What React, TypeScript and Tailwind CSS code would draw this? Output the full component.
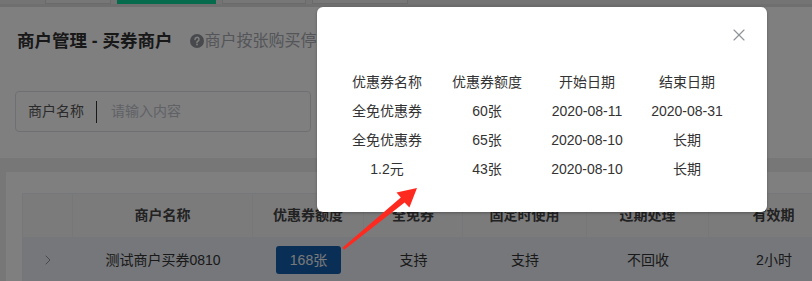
import React from 'react';
import { ChevronRight, X } from 'lucide-react';

const tabs = [
    { w: 'w-[66px]', active: false },
    { w: 'w-[99px]', active: true },
    { w: 'w-[84px]', active: false },
    { w: 'w-[96px]', active: false },
];

const columns = [
    { key: 'expand', label: '', w: 'w-[50px]' },
    { key: 'name', label: '商户名称', w: 'w-[180px]' },
    { key: 'quota', label: '优惠券额度', w: 'w-[111px]' },
    { key: 'free', label: '全免券', w: 'w-[99px]' },
    { key: 'fixed', label: '固定时使用', w: 'w-[124px]' },
    { key: 'expire', label: '过期处理', w: 'w-[122px]' },
    { key: 'valid', label: '有效期', w: 'w-[130px]' },
];

const coupons = [
    { name: '全免优惠券', quota: '60张', start: '2020-08-11', end: '2020-08-31' },
    { name: '全免优惠券', quota: '65张', start: '2020-08-10', end: '长期' },
    { name: '1.2元', quota: '43张', start: '2020-08-10', end: '长期' },
];

const QuestionIcon = () => (
    <svg width="14" height="14" viewBox="0 0 14 14">
        <circle cx="7" cy="7" r="7" fill="#909399" />
        <path d="M5 5.4a2 2 0 1 1 2.8 1.8c-.5.3-.8.6-.8 1.2v.4" stroke="#fff" strokeWidth="1.5" fill="none" strokeLinecap="round" />
        <circle cx="7" cy="10.6" r="0.9" fill="#fff" />
    </svg>
);

export default function App() {
    return (
        <div className="relative w-[812px] h-[281px] overflow-hidden bg-[#eeeeee] font-['Liberation_Sans','Noto_Sans_CJK_SC',sans-serif]">
            {/* top tab strip */}
            <div className="h-[7px] bg-[#e8e8e8] border-b-[3px] border-[#dedede] flex items-start gap-[6px] pl-[45px]">
                {tabs.map((t, i) => (
                    <div
                        key={i}
                        className={`${t.w} h-[4px] ${t.active ? 'bg-[#0cd698]' : 'bg-[#eeeeee] border-x border-b border-[#d4d4d4]'}`}
                    />
                ))}
            </div>

            {/* header block */}
            <div className="bg-white pt-[22px] pb-[26px]">
                <div className="flex items-center h-[24px] pl-[17px]">
                    <h1 className="text-[17.5px] font-bold text-[#303133] leading-[24px] whitespace-nowrap">商户管理 - 买券商户</h1>
                    <div className="ml-[17px] flex items-center gap-px">
                        <QuestionIcon />
                        <span className="text-[16px] text-[#a8abb2] leading-[24px] whitespace-nowrap">商户按张购买停车优惠券，可分发给车主使用</span>
                    </div>
                </div>
                <div className="mt-[38px] ml-[15px] w-[296px] h-[41px] border border-[#dcdfe6] rounded-[4px] flex items-center pl-[12px]">
                    <span className="text-[14px] text-[#555555]">商户名称</span>
                    <div className="ml-[12px] w-px h-[22px] bg-[#333333]" />
                    <span className="ml-[14px] text-[14px] text-[#c0c4cc]">请输入内容</span>
                </div>
            </div>

            {/* table panel */}
            <div className="pl-[6px] pt-[14px]">
                <div className="bg-white pt-[21px] pl-[16px]">
                    <div className="flex w-max border-l border-t border-[#ebeef5] bg-[#f7f7f9]">
                        {columns.map((c) => (
                            <div key={c.key} className={`${c.w} h-[44px] shrink-0 flex items-center justify-center border-r border-b border-[#ebeef5] text-[14px] font-bold text-[#444444] whitespace-nowrap`}>
                                {c.label}
                            </div>
                        ))}
                    </div>
                    <div className="flex w-max border-l border-[#ebeef5] bg-[#eaeef5] text-[14px] text-[#333333]">
                        <div className="w-[50px] h-[44px] shrink-0 flex items-center justify-center">
                            <ChevronRight size={16} strokeWidth={1.5} color="#909399" />
                        </div>
                        <div className="w-[180px] h-[44px] shrink-0 flex items-center justify-center">测试商户买券0810</div>
                        <div className="w-[111px] h-[44px] shrink-0 flex items-center justify-center">
                            <span className="w-[65px] h-[28px] rounded-[3px] bg-[#135faf] text-[#f2f2f2] flex items-center justify-center">168张</span>
                        </div>
                        <div className="w-[99px] h-[44px] shrink-0 flex items-center justify-center">支持</div>
                        <div className="w-[124px] h-[44px] shrink-0 flex items-center justify-center">支持</div>
                        <div className="w-[122px] h-[44px] shrink-0 flex items-center justify-center">不回收</div>
                        <div className="w-[130px] h-[44px] shrink-0 flex items-center justify-center">2小时</div>
                    </div>
                </div>
            </div>

            {/* mask */}
            <div className="absolute inset-0 bg-black/50" />

            {/* dialog */}
            <div className="absolute left-[317px] top-[7px] w-[450px] h-[205px] bg-white rounded-[6px] shadow-[0_1px_3px_rgba(0,0,0,0.3)]">
                <button className="absolute left-[412px] top-[18px] text-[#909399]">
                    <X size={20} strokeWidth={1.4} />
                </button>
                <div className="pt-[61px] px-[20px] text-[14px] text-[#333333]">
                    <div className="flex h-[29px] items-center">
                        <div className="w-[100px] text-center">优惠券名称</div>
                        <div className="w-[100px] text-center">优惠券额度</div>
                        <div className="w-[100px] text-center">开始日期</div>
                        <div className="w-[100px] text-center">结束日期</div>
                    </div>
                    {coupons.map((c, i) => (
                        <div key={i} className="flex h-[29px] items-center">
                            <div className="w-[100px] text-center">{c.name}</div>
                            <div className="w-[100px] text-center">{c.quota}</div>
                            <div className="w-[100px] text-center">{c.start}</div>
                            <div className="w-[100px] text-center">{c.end}</div>
                        </div>
                    ))}
                </div>
            </div>

            {/* annotation arrow */}
            <svg className="absolute left-0 top-0 pointer-events-none" width="812" height="281">
                <polygon
                    points="342.4,247.8 400.8,197.6 396.5,192.6 417,188 409.4,207.4 404.6,202.4 344.2,249.8"
                    fill="#ff2a1f"
                />
            </svg>
        </div>
    );
}
